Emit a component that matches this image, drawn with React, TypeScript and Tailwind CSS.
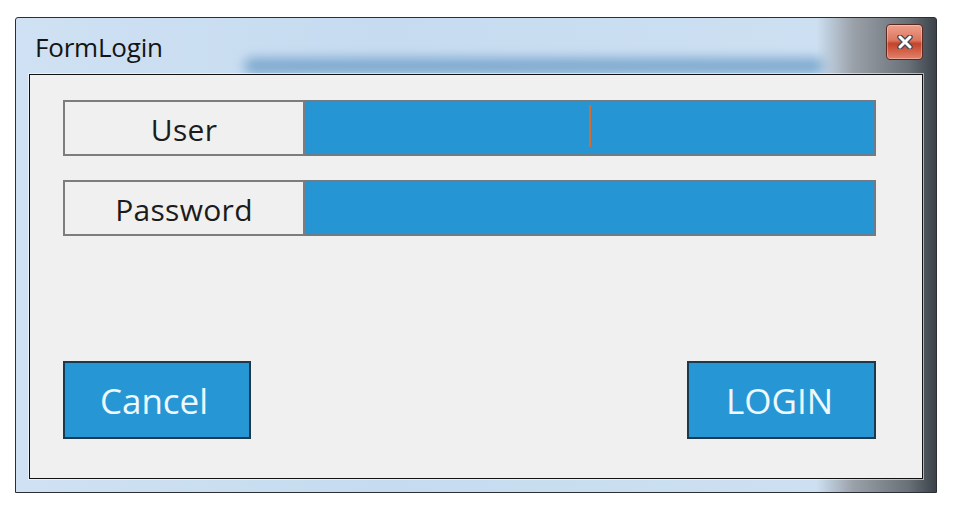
import React from 'react'

function CloseGlyph() {
  return (
    <svg width="16" height="14" viewBox="0 0 16 14">
      <path d="M3 2 L13 12 M13 2 L3 12" stroke="#464b55" strokeWidth="5.5" strokeLinecap="round" />
      <path d="M3 2 L13 12 M13 2 L3 12" stroke="#ffffff" strokeWidth="3" strokeLinecap="round" />
    </svg>
  )
}

function Field({ label, caret }: { label: string; caret?: boolean }) {
  return (
    <div className="flex h-[56px]">
      <div className="w-[242px] shrink-0 flex items-center justify-center border-2 border-[#7d7d7d] bg-[#f0f0f0] pt-[4px] text-[30px] text-[#1c1c1c] leading-none tracking-[0.3px]">
        {label}
      </div>
      <div className="relative flex-1 border-2 border-l-0 border-[#6e7c86] bg-[#2596d3]">
        {caret && <span className="absolute left-[284px] top-[3px] h-[42px] w-[2px] bg-[#d06c34]" />}
      </div>
    </div>
  )
}

export default function App() {
  return (
    <div className="w-[958px] h-[510px] bg-white pt-[17px] pl-[15px]" style={{ fontFamily: '"Open Sans", "Noto Sans", sans-serif' }}>
      <div className="relative w-[922px] h-[476px] flex flex-col border border-[#2b2e32] rounded-t-[3px] overflow-hidden bg-[linear-gradient(to_right,#cfe1f3_0%,#c6dbf0_40%,#cde0f2_87%,#9aa1a9_91%,#6a7078_97%,#3c4249_100%)]">
        {/* glass sheen of the title bar */}
        <div className="absolute left-[228px] top-[40px] w-[580px] h-[16px] rounded-full bg-[#6f9fc8] blur-[6px] opacity-85" />
        <div className="relative h-[56px] shrink-0 flex items-center justify-between pl-[19px] pr-[13px]">
          <span className="text-[26px] text-[#141414] leading-none pt-[2px] tracking-[-0.2px]">FormLogin</span>
          <button className="w-[37px] h-[36px] -mt-[8px] flex items-center justify-center rounded-[4px] border border-[#5a2a22] bg-[linear-gradient(to_bottom,#eea08c_0%,#dc7660_45%,#c4422a_55%,#e4826a_100%)] shadow-[inset_0_0_0_1px_rgba(255,255,255,0.3)]">
            <CloseGlyph />
          </button>
        </div>
        <div className="relative flex-1 mx-[13px] mb-[13px] flex flex-col border border-[#111] bg-[#f0f0f0] pt-[25px] pl-[33px] pr-[46px] pb-[39px] shadow-[0_0_0_1px_rgba(255,255,255,0.55)]">
          <div className="flex flex-col gap-[24px]">
            <Field label="User" caret />
            <Field label="Password" />
          </div>
          <div className="mt-auto flex justify-between">
            <button className="w-[188px] h-[78px] border-2 border-[#1b3a4e] bg-[#2697d4] text-[35px] text-[#eef8fd] leading-none pr-[6px]">
              Cancel
            </button>
            <button className="w-[189px] h-[78px] border-2 border-[#1b3a4e] bg-[#2697d4] text-[35px] text-[#eef8fd] leading-none pr-[4px]">
              LOGIN
            </button>
          </div>
        </div>
      </div>
    </div>
  )
}
